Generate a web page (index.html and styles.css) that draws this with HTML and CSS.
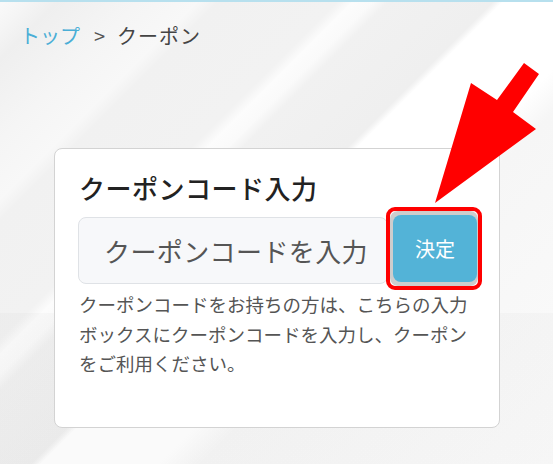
FILE: index.html
```html
<!DOCTYPE html>
<html lang="ja">
<head>
<meta charset="utf-8">
<title>クーポン</title>
<link rel="stylesheet" href="styles.css">
</head>
<body>
<div class="topline"></div>
<nav class="crumbs">
  <a class="crumb-link" href="#">トップ</a><span class="crumb-sep">&gt;</span><span class="crumb-current">クーポン</span>
</nav>
<main class="page">
  <section class="card">
    <h2 class="card-title">クーポンコード入力</h2>
    <div class="code-row">
      <input class="code-input" type="text" placeholder="クーポンコードを入力">
      <span class="mark"><button class="code-btn" type="button">決定</button></span>
    </div>
    <p class="note">クーポンコードをお持ちの方は、こちらの入力ボックスにクーポンコードを入力し、クーポンをご利用ください。</p>
  </section>
</main>
<svg class="arrow" width="553" height="464" viewBox="0 0 553 464" aria-hidden="true">
  <polygon points="435,203 471,83 497,100 524,63 539,74 513,112 536,129" fill="#ff0000"/>
</svg>
</body>
</html>
```
FILE: styles.css
```css
html, body {
  margin: 0;
  padding: 0;
  height: 100%;
}
body {
  position: relative;
  overflow: hidden;
  font-family: "Noto Sans CJK JP", "Noto Sans", sans-serif;
  color: #333;
  background:
    linear-gradient(to bottom, rgba(0,0,0,0) 313px, rgba(0,0,0,0.018) 313px),
    linear-gradient(135deg,
      #fafafa 0px, #f5f5f5 21px, #efefef 42px, #f5f5f5 99px, #f8f8f8 141px,
      #f1f1f1 156px, #f2f2f2 240px, #fcfcfc 251px, #fafafa 265px, #f1f1f1 276px,
      #efefef 350px, #ffffff 357px, #ffffff 440px, #f6f6f6 470px, #fbfbfb 719px);
}
.topline {
  height: 2px;
  background: #b7e0ee;
}
.crumbs {
  padding: 22px 0 0 20px;
  font-size: 20px;
  line-height: 24px;
  display: flex;
}
.crumb-link {
  color: #4aaed6;
  text-decoration: none;
}
.crumb-sep {
  color: #555;
  margin: 0 12px 0 14px;
}
.crumb-current {
  color: #444;
  letter-spacing: 1px;
}
.page {
  padding-top: 100px;
}
.card {
  box-sizing: border-box;
  margin-left: 54px;
  width: 446px;
  background: #fff;
  border: 1px solid #d3d3d3;
  border-radius: 8px;
  padding: 23px 24px 48px 24px;
}
.card-title {
  margin: 0;
  font-size: 26px;
  line-height: 31px;
  font-weight: 500;
  letter-spacing: 0.5px;
  color: #222;
}
.code-row {
  display: flex;
  align-items: flex-start;
  margin-top: 14px;
}
.code-input {
  flex-shrink: 0;
  box-sizing: border-box;
  width: 310px;
  height: 67px;
  margin: 0 0 0 -1px;
  padding: 0 0 0 25px;
  border: 1px solid #dfe2e6;
  border-radius: 8px;
  background: #f7f8fa;
  font-family: inherit;
  font-size: 26px;
  letter-spacing: 0.4px;
  color: #444;
  outline: none;
}
.code-input::placeholder {
  color: #555;
  opacity: 1;
}
.mark {
  position: relative;
  display: flex;
  flex-shrink: 0;
  margin: -2px 0 0 5px;
}
.mark::before {
  content: "";
  position: absolute;
  top: -4px;
  right: -1px;
  bottom: -4px;
  left: -3px;
  background: #cdcdcd;
  border-radius: 8px;
}
.mark::after {
  content: "";
  position: absolute;
  top: -8px;
  right: -5px;
  bottom: -8px;
  left: -7px;
  border: 4px solid #ff0000;
  border-radius: 9px;
  pointer-events: none;
}
.code-btn {
  position: relative;
  width: 84px;
  height: 67px;
  border: none;
  border-radius: 8px;
  background: #53b3d7;
  color: #fff;
  font-family: inherit;
  font-size: 20px;
  padding: 0;
}
.note {
  margin: 6px 0 0;
  font-size: 18.5px;
  line-height: 29.5px;
  color: #555;
}
.arrow {
  position: absolute;
  top: 0;
  left: 0;
  pointer-events: none;
}
```
